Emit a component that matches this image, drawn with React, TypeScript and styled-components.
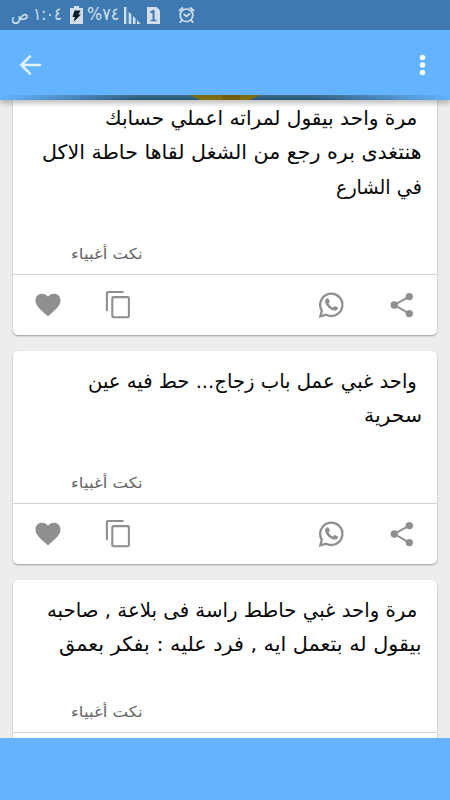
import React, { useLayoutEffect, useRef, useState } from "react";
import styled, { createGlobalStyle } from "styled-components";

const GlobalStyle = createGlobalStyle`
  * { box-sizing: border-box; }
  body { margin: 0; background: #ededed; font-family: "DejaVu Sans", "Noto Sans", sans-serif; }
`;

const Screen = styled.div`
  width: 450px;
  height: 800px;
  display: flex;
  flex-direction: column;
  overflow: hidden;
  background: #ededed;
`;

const StatusBar = styled.header`
  height: 30px;
  flex: none;
  display: flex;
  align-items: center;
  padding-left: 11px;
  background: #3e7ab1;
  color: #d3e0ec;
`;

const StatusText = styled.span<{ $width: number; $gap: number }>`
  width: ${(p) => p.$width}px;
  margin-right: ${(p) => p.$gap}px;
  height: 24px;
  display: flex;
  font-size: 17.5px;
  line-height: 23px;
`;

const StatusIcon = styled.svg<{ $gap: number }>`
  flex: none;
  margin-right: ${(p) => p.$gap}px;
`;

const Toolbar = styled.nav`
  height: 65px;
  flex: none;
  z-index: 2;
  display: flex;
  align-items: center;
  justify-content: space-between;
  padding: 5px 22px 0 16px;
  background: #63b3ff;
`;

const Banner = styled.div`
  height: 5px;
  flex: none;
  z-index: 1;
  display: flex;
  justify-content: center;
  background:
    linear-gradient(90deg, #63b3ff 0, rgba(99, 179, 255, 0) 30%, rgba(99, 179, 255, 0) 70%, #63b3ff 100%),
    linear-gradient(180deg, #416c8b, #285577);
  box-shadow: 0 2px 6px rgba(0, 0, 0, 0.4);
`;

const Feed = styled.main`
  height: 638px;
  flex: none;
  overflow: hidden;
  padding: 0 13px;
  display: flex;
  flex-direction: column;
  gap: 16px;
`;

const Card = styled.article<{ $clipped?: boolean }>`
  flex: none;
  height: ${(p) => (p.$clipped ? 235 : 213)}px;
  display: flex;
  flex-direction: column;
  background: #fff;
  border-radius: ${(p) => (p.$clipped ? "0 0 5px 5px" : "5px")};
  box-shadow: 0 1px 2px rgba(0, 0, 0, 0.35);
`;

const Joke = styled.div<{ $top: number }>`
  flex: 1;
  padding: ${(p) => p.$top}px 15px 0;
  direction: rtl;
  font-size: 20px;
  line-height: 34.4px;
  color: #080808;
`;

const Line = styled.div<{ $indent?: boolean; $width: number }>`
  width: ${(p) => p.$width}px;
  height: 34.4px;
  margin-right: ${(p) => (p.$indent ? 5 : 0)}px;
  display: flex;
`;

const Fitted = styled.span`
  display: inline-block;
  flex: none;
  white-space: nowrap;
`;

const Category = styled.div`
  width: 72px;
  height: 20px;
  margin: 0 0 10px 58px;
  direction: rtl;
  display: flex;
  font-size: 15px;
  line-height: 20px;
  color: #666;
`;

const Actions = styled.footer`
  height: 61px;
  flex: none;
  display: flex;
  align-items: center;
  border-top: 1px solid #d2d2d2;
  padding: 0 20px 0 19px;
  color: #8f8f8f;
`;

const ActionButton = styled.button<{ $gap: number }>`
  flex: none;
  width: 32px;
  height: 32px;
  padding: 0;
  margin-right: ${(p) => p.$gap}px;
  border: 0;
  background: none;
  color: inherit;
  svg { display: block; }
`;

const BottomBar = styled.div`
  height: 62px;
  flex: none;
  z-index: 1;
  background: #63b3ff;
`;

/* Stretches or condenses a run of text so that it spans exactly its container. */
function FitText({ children, rtl = true }: { children: string; rtl?: boolean }) {
  const ref = useRef<HTMLSpanElement>(null);
  const [scale, setScale] = useState(1);
  useLayoutEffect(() => {
    const el = ref.current;
    if (el && el.parentElement) setScale(el.parentElement.clientWidth / el.offsetWidth);
  }, [children]);
  return (
    <Fitted ref={ref} style={{ transform: `scaleX(${scale})`, transformOrigin: rtl ? "right" : "left" }}>
      {children}
    </Fitted>
  );
}

const HeartIcon = () => (
  <svg width="32" height="32" viewBox="0 0 32 32" fill="currentColor">
    <path d="M16 27.400 14.200 25.800C7.600 19.900 3.500 16.200 3.500 11.400 3.500 7.500 6.500 4.800 10 4.800c2.300 0 4.600 1.100 6 2.900 1.400-1.800 3.700-2.900 6-2.900 3.500 0 6.500 2.700 6.500 6.600 0 4.800-4.100 8.500-10.700 14.400z" />
  </svg>
);

const CopyIcon = () => (
  <svg width="32" height="32" viewBox="0 0 32 32" fill="none" stroke="currentColor" strokeWidth="2.100" strokeLinecap="round">
    <path d="M3.900 21.200V4.400Q3.900 3 5.300 3H19.800" />
    <rect x="9.300" y="8.100" width="16.600" height="20.200" rx="1.300" />
  </svg>
);

const WhatsappIcon = () => (
  <svg width="32" height="32" viewBox="0 0 32 32" fill="none">
    <path d="M5.400 27.300 6.800 21.600A11.100 11.100 0 1 1 11.200 25.700z" stroke="currentColor" strokeWidth="2.300" />
    <path d="M11.200 9.800c.8-.9 2.200-.9 2.500 0l1 2.500c.3.700-1.100 1.600-1.100 2.100.9 1.900 2.500 3.400 4.400 4 .8-.1 1.400-1.600 2-1.400l2.800 1.400c.6.400 0 2-1.100 2.600-1.700 1.100-4 .5-6.400-1-2.400-1.500-4.500-3.800-5.100-6.400-.3-1.500.1-2.900 1-3.800z" fill="currentColor" />
  </svg>
);

const ShareIcon = () => (
  <svg width="32" height="32" viewBox="0 0 32 32" fill="currentColor">
    <path d="M24.300 7.600 9.300 16l15 8.600" fill="none" stroke="currentColor" strokeWidth="2" />
    <circle cx="24.300" cy="7.600" r="3.700" />
    <circle cx="9.300" cy="16" r="3.700" />
    <circle cx="24.300" cy="24.600" r="3.700" />
  </svg>
);

interface JokeLine {
  text: string;
  width: number;
  indent?: boolean;
}

const jokes: { top: number; clipped?: boolean; lines: JokeLine[] }[] = [
  {
    top: 1,
    clipped: true,
    lines: [
      { text: "مرة واحد بيقول لمراته اعملي حسابك", width: 312, indent: true },
      { text: "هنتغدى بره رجع من الشغل لقاها حاطة الاكل", width: 380 },
      { text: "في الشارع", width: 86 },
    ],
  },
  {
    top: 13,
    lines: [
      { text: "واحد غبي عمل باب زجاج... حط فيه عين", width: 329, indent: true },
      { text: "سحرية", width: 58 },
    ],
  },
  {
    top: 13,
    lines: [
      { text: "مرة واحد غبي حاطط راسة فى بلاعة , صاحبه", width: 370, indent: true },
      { text: "بيقول له بتعمل ايه , فرد عليه : بفكر بعمق", width: 363 },
    ],
  },
];

export default function App() {
  return (
    <>
      <GlobalStyle />
      <Screen>
        <StatusBar>
          <StatusText $width={51} $gap={8} dir="rtl">
            <FitText>١:٠٤ ص</FitText>
          </StatusText>
          <StatusIcon $gap={4} width="13" height="20" viewBox="0 0 13 20">
            <path d="M4 1h5v2h4v16H0V3h4z" fill="#d3e0ec" />
            <path d="M4.500 5.500h6L8.500 9.500H11L3.500 17l1.500-5H2.500z" fill="#0d1c2b" />
          </StatusIcon>
          <StatusText $width={32} $gap={5} dir="ltr">
            <FitText rtl={false}>%٧٤</FitText>
          </StatusText>
          <StatusIcon $gap={6} width="17" height="17" viewBox="0 0 17 17">
            <path d="M0 0h2.500v17H0zM4.500 4.500l3 3V17h-3zM9 9l2.500 2.500V17H9zM13 13l3.500 4H13z" fill="#d3e0ec" />
            <path d="M2.500 2.500l2 2V17h-2zM7.500 7.500 9 9v8H7.500z" fill="#4387c4" />
          </StatusIcon>
          <StatusIcon $gap={17} width="14" height="17" viewBox="0 0 14 17">
            <path d="M0 0h9.500L13 3.500V17H0z" fill="#d3e0ec" />
            <path d="M3.500 5.500 6.500 4v9.500" fill="none" stroke="#3e7ab1" strokeWidth="2" />
            <path d="M3.500 13.500h6" stroke="#3e7ab1" strokeWidth="1.500" />
          </StatusIcon>
          <StatusIcon $gap={0} width="17" height="18" viewBox="0 0 17 18" fill="none" stroke="#d3e0ec" strokeWidth="1.700">
            <circle cx="8.500" cy="9.300" r="6.300" />
            <path d="M1 5 5 1.500M12 1.500 16 5M4 14 1.800 16.800M13 14l2.200 2.800M5.500 8l3 2.500L12 7.500" />
          </StatusIcon>
        </StatusBar>
        <Toolbar>
          <svg width="28" height="28" viewBox="0 0 28 28" fill="none" stroke="#e3f1ff" strokeWidth="2.600" strokeLinecap="round">
            <path d="M24 14H5.500M14 5.300 5.300 14 14 22.700" />
          </svg>
          <svg width="12" height="28" viewBox="0 0 12 28" fill="#fff">
            <circle cx="6.500" cy="6.500" r="2.700" />
            <circle cx="6.500" cy="14" r="2.700" />
            <circle cx="6.500" cy="21.500" r="2.700" />
          </svg>
        </Toolbar>
        <Banner>
          <svg width="72" height="5" viewBox="0 0 72 5">
            <path d="M1 0H71L61 5H11z" fill="#7c6c12" />
            <path d="M32 0H52L50 5H33z" fill="#755d10" />
          </svg>
        </Banner>
        <Feed>
          {jokes.map((joke, i) => (
            <Card key={i} $clipped={joke.clipped}>
              <Joke $top={joke.top}>
                {joke.lines.map((line) => (
                  <Line key={line.text} $width={line.width} $indent={line.indent}>
                    <FitText>{line.text}</FitText>
                  </Line>
                ))}
              </Joke>
              <Category>
                <FitText>نكت أغبياء</FitText>
              </Category>
              <Actions>
                <ActionButton $gap={39} aria-label="Like"><HeartIcon /></ActionButton>
                <ActionButton $gap={180} aria-label="Copy"><CopyIcon /></ActionButton>
                <ActionButton $gap={38} aria-label="WhatsApp"><WhatsappIcon /></ActionButton>
                <ActionButton $gap={0} aria-label="Share"><ShareIcon /></ActionButton>
              </Actions>
            </Card>
          ))}
        </Feed>
        <BottomBar />
      </Screen>
    </>
  );
}
